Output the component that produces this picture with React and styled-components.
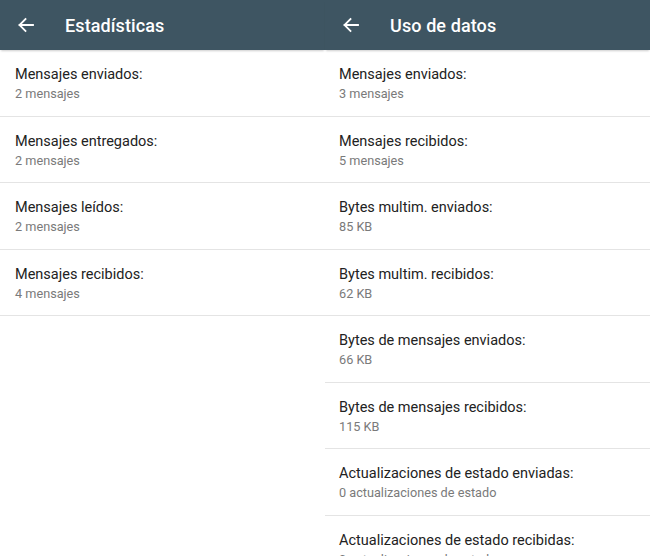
import styled, { createGlobalStyle } from "styled-components";

const GlobalStyle = createGlobalStyle`
  html, body {
    margin: 0;
    padding: 0;
    background: #ffffff;
    font-family: Roboto, "Liberation Sans", sans-serif;
  }
`;

const Screens = styled.div`
  display: grid;
  grid-template-columns: 325px 325px;
  width: 650px;
  height: 556px;
  overflow: hidden;
  background: #fff;
`;

const Screen = styled.div`
  display: flex;
  flex-direction: column;
  min-width: 0;
`;

const AppBar = styled.header`
  display: flex;
  align-items: center;
  height: 50px;
  flex-shrink: 0;
  padding-left: ${(p) => p.$pad}px;
  background-color: #3e5562;
  color: #fff;
  box-shadow: 0 2px 2px -1px rgba(0, 0, 0, 0.2);
  position: relative;
  z-index: 1;
`;

const BackButton = styled.span`
  display: flex;
  width: 18px;
  height: 18px;
  margin-right: ${(p) => p.$gap}px;
`;

const Title = styled.h1`
  margin: 0;
  font-size: 18px;
  font-weight: 500;
  letter-spacing: 0.1px;
`;

const List = styled.ul`
  list-style: none;
  margin: 0;
  padding: 0;
`;

const Row = styled.li`
  box-sizing: border-box;
  height: 66.5px;
  padding: 15px 0 0 ${(p) => p.$pad}px;
  border-bottom: 1px solid #e4e4e4;
`;

const Label = styled.div`
  font-size: 14.5px;
  line-height: 20px;
  color: #222;
`;

const Value = styled.div`
  font-size: 12.7px;
  line-height: 18px;
  color: #7a7a7a;
`;

const BackArrow = () => (
  <svg width="18" height="18" viewBox="0 0 18 18" fill="none">
    <path
      d="M16 9H2.5M8.5 3L2.5 9l6 6"
      stroke="#fff"
      strokeWidth="1.8"
      strokeLinecap="square"
    />
  </svg>
);

const stats = [
  ["Mensajes enviados:", "2 mensajes"],
  ["Mensajes entregados:", "2 mensajes"],
  ["Mensajes leídos:", "2 mensajes"],
  ["Mensajes recibidos:", "4 mensajes"],
];

const usage = [
  ["Mensajes enviados:", "3 mensajes"],
  ["Mensajes recibidos:", "5 mensajes"],
  ["Bytes multim. enviados:", "85 KB"],
  ["Bytes multim. recibidos:", "62 KB"],
  ["Bytes de mensajes enviados:", "66 KB"],
  ["Bytes de mensajes recibidos:", "115 KB"],
  ["Actualizaciones de estado enviadas:", "0 actualizaciones de estado"],
  ["Actualizaciones de estado recibidas:", "0 actualizaciones de estado"],
];

const Panel = ({ title, items, barPad, gap, rowPad }) => (
  <Screen>
    <AppBar $pad={barPad}>
      <BackButton $gap={gap}>
        <BackArrow />
      </BackButton>
      <Title>{title}</Title>
    </AppBar>
    <List>
      {items.map(([label, value]) => (
        <Row key={label} $pad={rowPad}>
          <Label>{label}</Label>
          <Value>{value}</Value>
        </Row>
      ))}
    </List>
  </Screen>
);

export default function App() {
  return (
    <>
      <GlobalStyle />
      <Screens>
        <Panel title="Estadísticas" items={stats} barPad={17} gap={30} rowPad={15} />
        <Panel title="Uso de datos" items={usage} barPad={17} gap={30} rowPad={14} />
      </Screens>
    </>
  );
}
